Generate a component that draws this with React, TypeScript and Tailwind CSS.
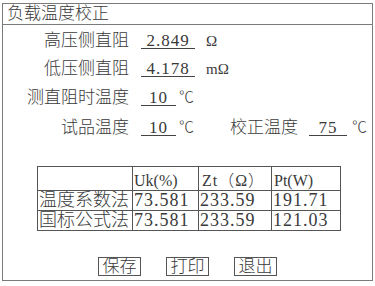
const font = { fontFamily: '"Liberation Serif", "Noto Sans CJK SC", serif' };

function Field({ value, width }: { value: string; width: string }) {
  return (
    <span className={`${width} h-[16px] leading-[16px] border-b border-[#444] text-center text-[17px] tracking-[1px]`}>
      {value}
    </span>
  );
}

export default function App() {
  const rows = [
    { name: "温度系数法", uk: "73.581", zt: "233.59", pt: "191.71" },
    { name: "国标公式法", uk: "73.581", zt: "233.59", pt: "121.03" },
  ];

  return (
    <div className="w-[375px] h-[286px] bg-white pt-[3px] pl-[2px] text-[#3a3a3a] font-light" style={font}>
      <div className="w-[371px] h-[278px] border border-[#7a7a7a] flex flex-col">
        {/* Title */}
        <div className="h-[21px] border-b border-[#7a7a7a] pl-[4px] text-[17px] leading-[20px]">
          负载温度校正
        </div>

        {/* Form */}
        <div className="pt-[2px] flex flex-col">
          <div className="h-[28px] flex items-center">
            <span className="w-[126px] text-right text-[17px]">高压侧直阻</span>
            <span className="ml-[12px] flex"><Field value="2.849" width="w-[54px]" /></span>
            <span className="ml-[11px] text-[15px]">Ω</span>
          </div>
          <div className="h-[28px] flex items-center">
            <span className="w-[126px] text-right text-[17px]">低压侧直阻</span>
            <span className="ml-[12px] flex"><Field value="4.178" width="w-[54px]" /></span>
            <span className="ml-[11px] text-[15px]">mΩ</span>
          </div>
          <div className="h-[29px] flex items-center">
            <span className="w-[126px] text-right text-[17px]">测直阻时温度</span>
            <span className="ml-[12px] flex"><Field value="10" width="w-[35px]" /></span>
            <span className="ml-[3px] text-[15px]">℃</span>
          </div>
          <div className="h-[31px] flex items-center">
            <span className="w-[126px] text-right text-[17px]">试品温度</span>
            <span className="ml-[12px] flex"><Field value="10" width="w-[35px]" /></span>
            <span className="ml-[3px] text-[15px]">℃</span>
            <span className="ml-[36px] text-[17px]">校正温度</span>
            <span className="ml-[11px] flex"><Field value="75" width="w-[38px]" /></span>
            <span className="ml-[5px] text-[15px]">℃</span>
          </div>
        </div>

        {/* Results table */}
        <table className="mt-[23px] ml-[34px] w-[303px] table-fixed border-collapse text-[18px] leading-[19px]">
          <tbody>
            <tr className="h-[24px]">
              <td className="w-[95px] border border-[#555]"></td>
              <td className="w-[66px] border border-[#555] align-bottom text-[16px] leading-[18px] pl-[1px]">
                Uk(%)
              </td>
              <td className="w-[73px] border border-[#555] align-bottom text-[16px] leading-[18px] pl-[3px] tracking-[1px]">
                Zt（Ω）
              </td>
              <td className="w-[69px] border border-[#555] align-bottom text-[16px] leading-[18px] pl-[2px]">
                Pt(W)
              </td>
            </tr>
            {rows.map((r) => (
              <tr key={r.name} className="h-[20px]">
                <td className="border border-[#555] pl-[1px] whitespace-nowrap">{r.name}</td>
                <td className="border border-[#555] pl-[1px] tracking-[1px] whitespace-nowrap">{r.uk}</td>
                <td className="border border-[#555] pl-[1px] tracking-[1px] whitespace-nowrap">{r.zt}</td>
                <td className="border border-[#555] pl-[1px] tracking-[1px] whitespace-nowrap">{r.pt}</td>
              </tr>
            ))}
          </tbody>
        </table>

        {/* Buttons */}
        <div className="mt-[26px] ml-[95px] flex gap-[25px]">
          {["保存", "打印", "退出"].map((b) => (
            <button
              key={b}
              className="w-[43px] h-[19px] border border-[#555] text-[17px] leading-[17px] flex items-center justify-center"
            >
              {b}
            </button>
          ))}
        </div>
      </div>
    </div>
  );
}
